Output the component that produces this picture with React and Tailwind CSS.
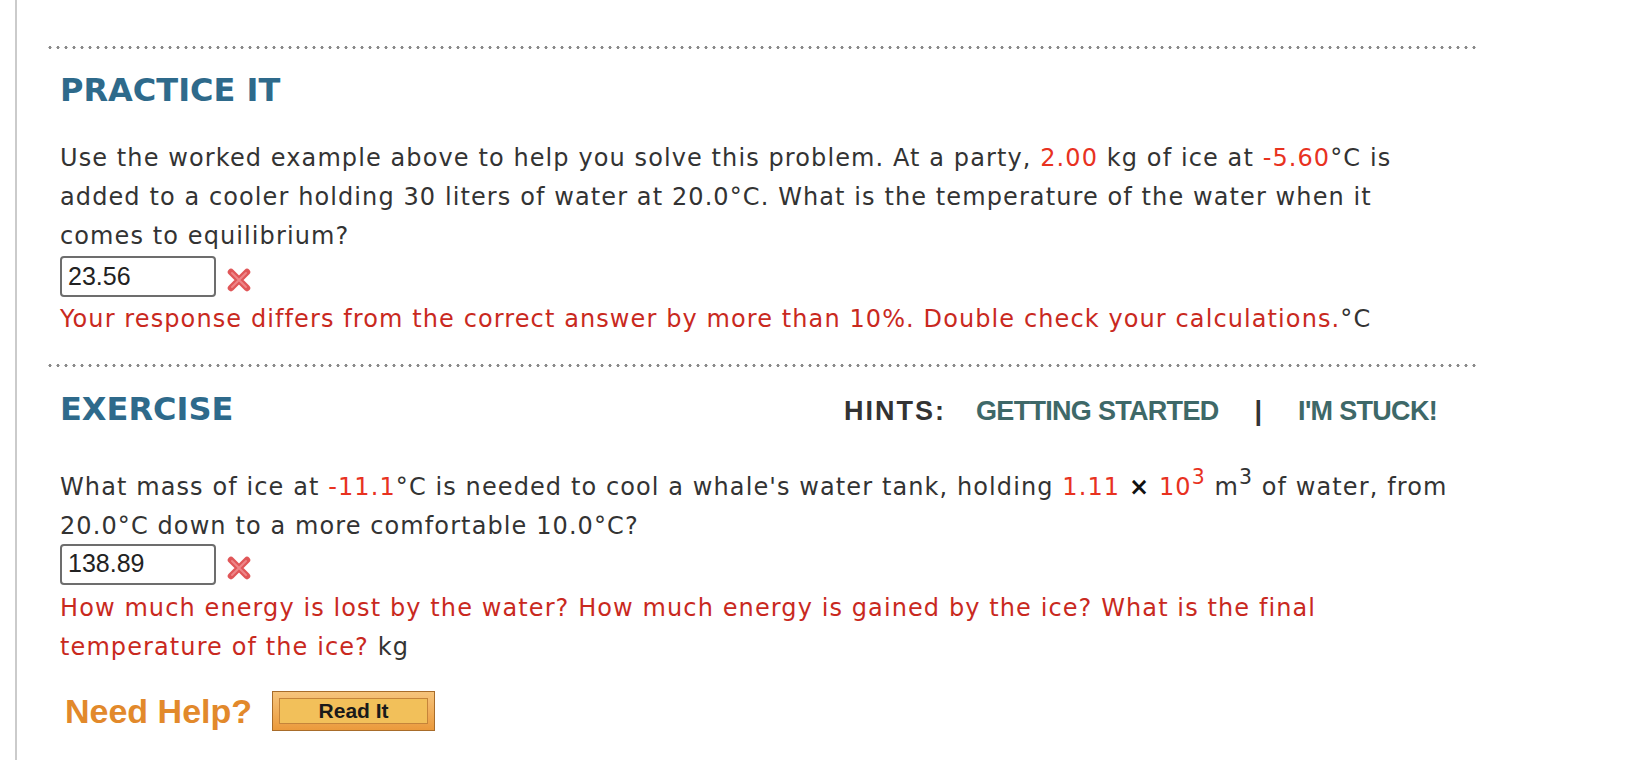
import React from "react";

const body = "font-['DejaVu_Sans',Verdana,sans-serif] text-[24px] tracking-[1.1px] leading-[39px] text-[#333]";
const num = "text-[#e8321f]";
const err = "text-[#c9291e]";

function DotLine() {
  return (
    <div className="h-[3px] w-full bg-repeat-x bg-[radial-gradient(circle,#8a8a8a_1.4px,transparent_1.7px)] bg-[length:8px_3px]" />
  );
}

function WrongMark() {
  return (
    <svg width="26" height="26" viewBox="0 0 26 26" className="mb-[4px]">
      <g strokeLinecap="round">
        <path d="M5 5 L21 21 M21 5 L5 21" stroke="#e05658" strokeWidth="6.5" />
        <path d="M6 6 L20 20 M20 6 L6 20" stroke="#ee8587" strokeWidth="2" />
      </g>
    </svg>
  );
}

function Answer({ value }) {
  return (
    <div className="flex items-end gap-[10px]">
      <div className="w-[156px] h-[41px] border-2 border-[#6d6d6d] rounded-[4px] pl-[6px] flex items-center font-['Liberation_Sans',Arial,sans-serif] text-[25px] text-[#222]">
        {value}
      </div>
      <WrongMark />
    </div>
  );
}

function Heading({ children }) {
  return (
    <h2 className="font-['DejaVu_Sans',Verdana,sans-serif] font-bold text-[32px] leading-[40px] text-[#2e6a8b]">
      {children}
    </h2>
  );
}

export default function App() {
  return (
    <div className="bg-white min-h-screen pl-[15px]">
      <div className="border-l-2 border-[#cbcbcb] min-h-screen pl-[29px] pt-[46px]">
        <div className="w-[1430px]">
          {/* PRACTICE IT */}
          <DotLine />
          <div className="pl-[14px]">
            <div className="mt-[21px]">
              <Heading>PRACTICE IT</Heading>
            </div>
            <p className={`${body} mt-[29px]`}>
              Use the worked example above to help you solve this problem. At a party, <span className={num}>2.00</span> kg of ice at <span className={num}>-5.60</span>°C is
              <br />
              added to a cooler holding 30 liters of water at 20.0°C. What is the temperature of the water when it
              <br />
              comes to equilibrium?
            </p>
            <div className="mt-[0px]">
              <Answer value="23.56" />
            </div>
            <p className={`${body} mt-[3px]`}>
              <span className={err}>Your response differs from the correct answer by more than 10%. Double check your calculations.</span>°C
            </p>
          </div>

          {/* EXERCISE */}
          <div className="mt-[25px]">
            <DotLine />
          </div>
          <div className="pl-[14px]">
            <div className="mt-[22px] flex items-baseline justify-between pr-[39px]">
              <Heading>EXERCISE</Heading>
              <div className="flex items-baseline font-['Liberation_Sans',Arial,sans-serif] font-bold text-[27px]">
                <span className="text-[#333] tracking-[2px]">HINTS:</span>
                <a href="#" className="ml-[30px] text-[#3e6868] tracking-[-0.7px]">GETTING STARTED</a>
                <span className="ml-[36px] mr-[36px] text-[#333]">|</span>
                <a href="#" className="text-[#3e6868] tracking-[-0.7px]">I'M STUCK!</a>
              </div>
            </div>
            <p className={`${body} mt-[36px]`}>
              What mass of ice at <span className={num}>-11.1</span>°C is needed to cool a whale's water tank, holding <span className={num}>1.11</span> <b className="text-[#111]">×</b> <span className={num}>10<sup className="text-[85%]">3</sup></span> m<sup className="text-[85%]">3</sup> of water, from
              <br />
              20.0°C down to a more comfortable 10.0°C?
            </p>
            <div className="mt-[-2px]">
              <Answer value="138.89" />
            </div>
            <p className={`${body} mt-[4px]`}>
              <span className={err}>How much energy is lost by the water? How much energy is gained by the ice? What is the final
              <br />
              temperature of the ice?</span> kg
            </p>

            <div className="mt-[19px] flex items-center">
              <span className="ml-[5px] font-['Liberation_Sans',Arial,sans-serif] font-bold text-[34px] text-[#e2892b]">
                Need Help?
              </span>
              <button className="ml-[20px] w-[163px] h-[40px] border border-[#a86c2a] bg-[linear-gradient(#f6c47c,#eb9a3c)] p-[6px]">
                <span className="flex h-full w-full items-center justify-center border border-[#c5843a] bg-[#f2c05a] font-['Liberation_Sans',Arial,sans-serif] font-bold text-[21px] text-[#1a1a1a]">
                  Read It
                </span>
              </button>
            </div>
          </div>
        </div>
      </div>
    </div>
  );
}
